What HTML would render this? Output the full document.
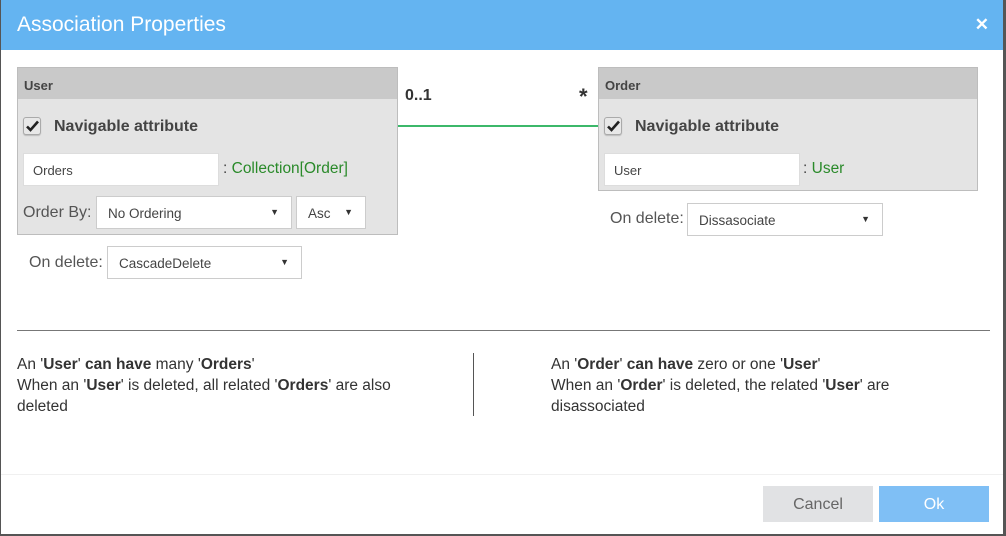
<!DOCTYPE html>
<html><head><style>
*{box-sizing:border-box;margin:0;padding:0}
body{width:1006px;height:536px;background:#555;font-family:"Liberation Sans",sans-serif;color:#333;overflow:hidden;position:relative}
.dlg{position:absolute;left:1px;top:0;width:1002px;height:534px;background:#fff}
.hd{position:absolute;left:0;top:0;width:1002px;height:50px;background:#64b4f1;color:#fff;font-size:21px;padding:13px 0 0 16px}
.x{position:absolute;right:14px;top:15px;font-size:17px;font-weight:bold}
.a{position:absolute}
.box{position:absolute;background:#e4e4e4;border:1px solid #bdbdbd}
.bh{height:31px;background:#c9c9c9;font-size:13px;font-weight:bold;padding:10px 0 0 6px;color:#444}
.cb{position:absolute;width:18px;height:18px;border:1px solid #aaa;border-radius:3px;background:#e8e8e8;box-shadow:0 1px 1px #bbb}
.cb svg{position:absolute;left:2px;top:2px}
.nav{position:absolute;font-size:16px;font-weight:bold;color:#444}
.in{position:absolute;background:#fff;border:1px solid #ddd;font-size:13px;padding:9px 0 0 9px;color:#444}
.g{position:absolute;font-size:15.5px;color:#2a8a2a}
.lab{position:absolute;font-size:16px;color:#555}
.sel{position:absolute;background:#fff;border:1px solid #ccc;font-size:13.5px;padding:9px 0 0 11px;color:#444}
.sel:after{content:"\25BC";position:absolute;right:12px;top:10px;font-size:9px;color:#333}
.t{position:absolute;font-size:15.5px;line-height:21px;color:#333}
.btn{position:absolute;top:486px;width:110px;height:36px;font-size:16px;text-align:center;line-height:38px}
</style></head><body>
<div class="dlg">
<div class="hd">Association Properties<span class="x">✕</span></div>

<div class="box" style="left:16px;top:67px;width:381px;height:168px">
<div class="bh">User</div></div>
<div class="cb" style="left:22px;top:117px"><svg width="13" height="12" viewBox="0 0 13 12"><path d="M1 6.5 L4.5 10 L12 1.5" fill="none" stroke="#222" stroke-width="2.6"/></svg></div>
<div class="nav" style="left:53px;top:118px">Navigable attribute</div>
<div class="in" style="left:22px;top:153px;width:196px;height:33px">Orders</div>
<div class="g" style="left:222px;top:160px"><span style="color:#444">:</span> Collection[Order]</div>
<div class="lab" style="left:22px;top:204px">Order By:</div>
<div class="sel" style="left:95px;top:196px;width:196px;height:33px">No Ordering</div>
<div class="sel" style="left:295px;top:196px;width:70px;height:33px">Asc</div>
<div class="lab" style="left:28px;top:254px">On delete:</div>
<div class="sel" style="left:106px;top:246px;width:195px;height:33px">CascadeDelete</div>

<div class="a" style="left:397px;top:125px;width:201px;height:2px;background:#3cb86a"></div>
<div class="a" style="left:404px;top:87px;font-size:16px;font-weight:bold">0..1</div>
<div class="a" style="left:578px;top:84px;font-size:22px;font-weight:bold">*</div>

<div class="box" style="left:597px;top:67px;width:380px;height:124px">
<div class="bh">Order</div></div>
<div class="cb" style="left:603px;top:117px"><svg width="13" height="12" viewBox="0 0 13 12"><path d="M1 6.5 L4.5 10 L12 1.5" fill="none" stroke="#222" stroke-width="2.6"/></svg></div>
<div class="nav" style="left:634px;top:118px">Navigable attribute</div>
<div class="in" style="left:603px;top:153px;width:196px;height:33px">User</div>
<div class="g" style="left:802px;top:160px"><span style="color:#444">:</span> User</div>
<div class="lab" style="left:609px;top:210px">On delete:</div>
<div class="sel" style="left:686px;top:203px;width:196px;height:33px">Dissasociate</div>

<div class="a" style="left:16px;top:330px;width:973px;height:1px;background:#777"></div>
<div class="t" style="left:16px;top:354px">An '<b>User</b>' <b>can have</b> many '<b>Orders</b>'<br>When an '<b>User</b>' is deleted, all related '<b>Orders</b>' are also<br>deleted</div>
<div class="a" style="left:472px;top:353px;width:1px;height:63px;background:#555"></div>
<div class="t" style="left:550px;top:354px">An '<b>Order</b>' <b>can have</b> zero or one '<b>User</b>'<br>When an '<b>Order</b>' is deleted, the related '<b>User</b>' are<br>disassociated</div>

<div class="a" style="left:0;top:474px;width:1002px;height:1px;background:#f0f0f0"></div>
<div class="btn" style="left:762px;background:#e1e2e4;color:#666">Cancel</div>
<div class="btn" style="left:878px;background:#7fbff5;color:#fff">Ok</div>
</div>
</body></html>
